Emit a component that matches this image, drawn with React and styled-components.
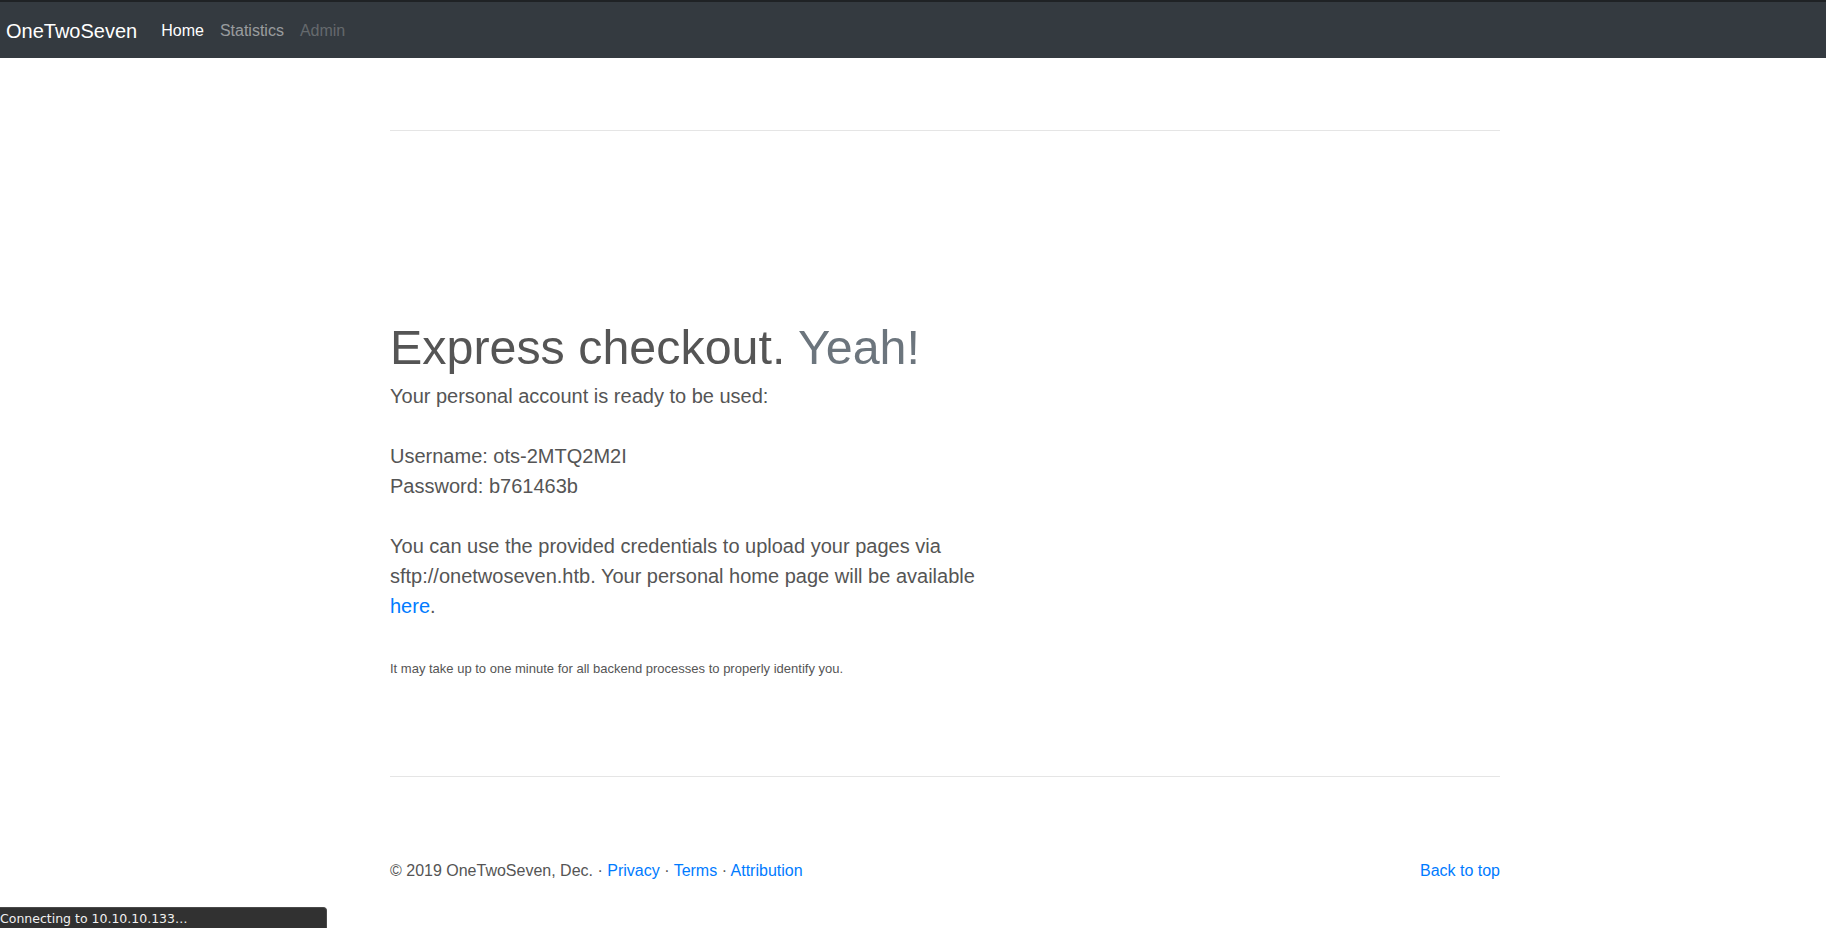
import React from 'react'
import styled, {createGlobalStyle} from 'styled-components'

const GlobalStyle = createGlobalStyle`
    html, body {
        margin: 0;
        padding: 0;
        background: #fff;
    }
    body {
        font-family: "Liberation Sans", Arial, Helvetica, sans-serif;
        font-size: 16px;
        line-height: 1.5;
        color: #555;
    }
    a {
        color: #007bff;
        text-decoration: none;
    }
`

const Navbar = styled.nav`
    display: flex;
    align-items: center;
    height: 56px;
    padding: 0 6px;
    background: #343a40;
    border-top: 2px solid #1f2225;
`

const Brand = styled.a`
    font-size: 20px;
    line-height: 30px;
    color: #fff;
    margin-right: 16px;
    margin-top: 1px;
`

const NavList = styled.ul`
    display: flex;
    list-style: none;
    margin: 2px 0 0;
    padding: 0;
`

const NavLink = styled.a`
    display: block;
    padding: 8px;
    font-size: 16px;
    line-height: 24px;
    color: ${p => p.$active ? '#fff' : p.$disabled ? 'rgba(255,255,255,.25)' : 'rgba(255,255,255,.5)'};
`

const Container = styled.div`
    width: 1110px;
    margin-left: 390px;
`

const Rule = styled.hr`
    margin: 0;
    border: 0;
    border-top: 1px solid rgba(0,0,0,.1);
`

const Top = styled.div`
    padding-top: 72px;
`

const Hero = styled.section`
    padding: 188px 0 98px;
`

const Heading = styled.h1`
    margin: 0 0 4px;
    font-size: 48.4px;
    font-weight: 400;
    line-height: 57.6px;
    color: #555;

    span {
        color: #6c757d;
    }
`

const Lead = styled.p`
    margin: 0;
    max-width: 605px;
    font-size: 20px;
    line-height: 30px;
`

const Small = styled.p`
    margin: 38px 0 0;
    font-size: 13px;
    line-height: 19.2px;
`

const Footer = styled.footer`
    display: flex;
    justify-content: space-between;
    padding-top: 82px;
    padding-bottom: 44px;
    font-size: 16px;
    line-height: 24px;
`

const StatusBar = styled.div`
    position: fixed;
    left: 0;
    bottom: 0;
    width: 326px;
    height: 20px;
    background: #313131;
    border-top: 1px solid #4a4a4a;
    border-right: 1px solid #4a4a4a;
    border-top-right-radius: 4px;
    color: #f0f0f0;
    font-family: "DejaVu Sans", sans-serif;
    font-size: 12.5px;
    line-height: 21px;
    white-space: nowrap;
    overflow: hidden;
`

const App = () => {
    return (
        <>
            <GlobalStyle />
            <Navbar>
                <Brand href="#">OneTwoSeven</Brand>
                <NavList>
                    <li><NavLink $active href="#">Home</NavLink></li>
                    <li><NavLink href="#">Statistics</NavLink></li>
                    <li><NavLink $disabled href="#">Admin</NavLink></li>
                </NavList>
            </Navbar>
            <Container>
                <Top>
                    <Rule />
                </Top>
                <Hero>
                    <Heading>Express checkout. <span>Yeah!</span></Heading>
                    <Lead>
                        Your personal account is ready to be used:<br />
                        <br />
                        Username: ots-2MTQ2M2I<br />
                        Password: b761463b<br />
                        <br />
                        You can use the provided credentials to upload your pages via
                        sftp://onetwoseven.htb. Your personal home page will be available <a href="#">here</a>.
                    </Lead>
                    <Small>It may take up to one minute for all backend processes to properly identify you.</Small>
                </Hero>
                <Rule />
                <Footer>
                    <span>
                        © 2019 OneTwoSeven, Dec. · <a href="#">Privacy</a> · <a href="#">Terms</a> · <a href="#">Attribution</a>
                    </span>
                    <a href="#">Back to top</a>
                </Footer>
            </Container>
            <StatusBar>Connecting to 10.10.10.133…</StatusBar>
        </>
    )
}

export default App
